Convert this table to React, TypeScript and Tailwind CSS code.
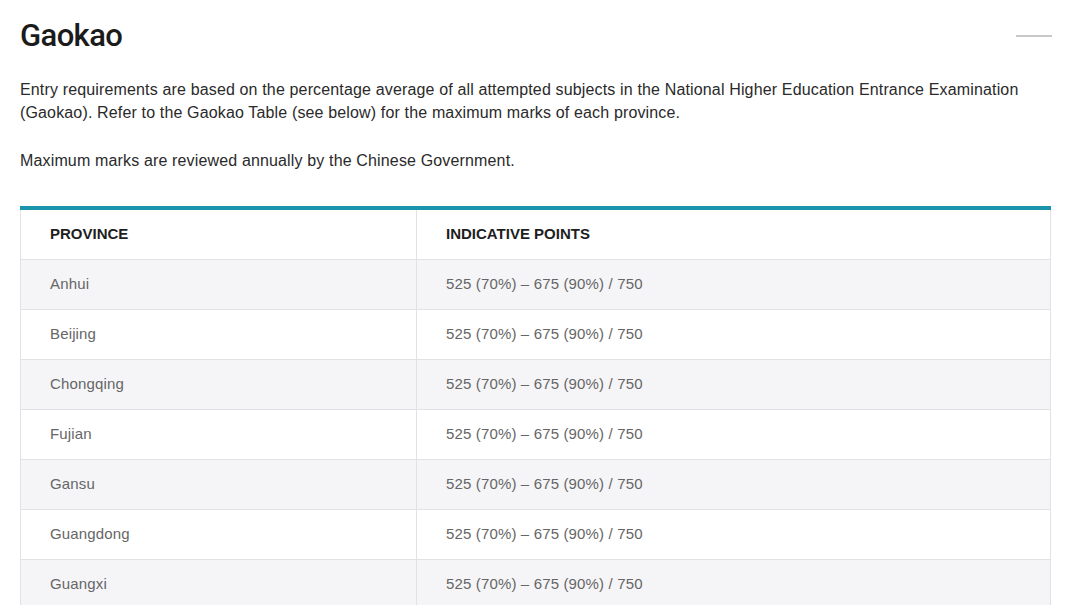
const rows = [
  "Anhui",
  "Beijing",
  "Chongqing",
  "Fujian",
  "Gansu",
  "Guangdong",
  "Guangxi",
  "Guizhou",
];

export default function App() {
  return (
    <div className="w-[1080px] h-[605px] overflow-hidden bg-white font-['Liberation_Sans',Arial,sans-serif]">
      <div className="px-5 pt-[14px]">
        <div className="flex items-center justify-between">
          <h1 className="text-[31px] leading-[44px] font-medium text-[#1b1b1b] tracking-[-0.6px] font-['Roboto',sans-serif]">
            Gaokao
          </h1>
          <div className="w-9 h-[2px] bg-[#c8c8c8] mr-[8px]" />
        </div>
        <p className="mt-[20px] text-[16px] leading-[23px] tracking-[0.15px] text-[#2a2a2a]">
          Entry requirements are based on the percentage average of all attempted subjects in the National Higher Education Entrance Examination (Gaokao). Refer to the Gaokao Table (see below) for the maximum marks of each province.
        </p>
        <p className="mt-[25px] text-[16px] leading-[23px] tracking-[0.15px] text-[#2a2a2a]">
          Maximum marks are reviewed annually by the Chinese Government.
        </p>
        <div className="mt-[34px] w-[1031px] border-t-4 border-[#1c93ad]">
          <div className="grid grid-cols-[396px_1fr] border-x border-[#e2e2e6]">
            <div className="h-[50px] flex items-center pl-[29px] border-r border-b border-[#e2e2e6] text-[15px] font-bold text-[#1e1e1e]">
              PROVINCE
            </div>
            <div className="h-[50px] flex items-center pl-[29px] border-b border-[#e2e2e6] text-[15px] font-bold text-[#1e1e1e]">
              INDICATIVE POINTS
            </div>
            {rows.map((name, i) => (
              <div key={name} className="contents">
                <div
                  className={`h-[50px] flex items-center pl-[29px] border-r border-b border-[#e2e2e6] text-[15px] tracking-[0.15px] text-[#666] ${
                    i % 2 === 0 ? "bg-[#f5f5f8]" : "bg-white"
                  }`}
                >
                  {name}
                </div>
                <div
                  className={`h-[50px] flex items-center pl-[29px] border-b border-[#e2e2e6] text-[15px] tracking-[0.15px] text-[#666] ${
                    i % 2 === 0 ? "bg-[#f5f5f8]" : "bg-white"
                  }`}
                >
                  525 (70%) – 675 (90%) / 750
                </div>
              </div>
            ))}
          </div>
        </div>
      </div>
    </div>
  );
}
